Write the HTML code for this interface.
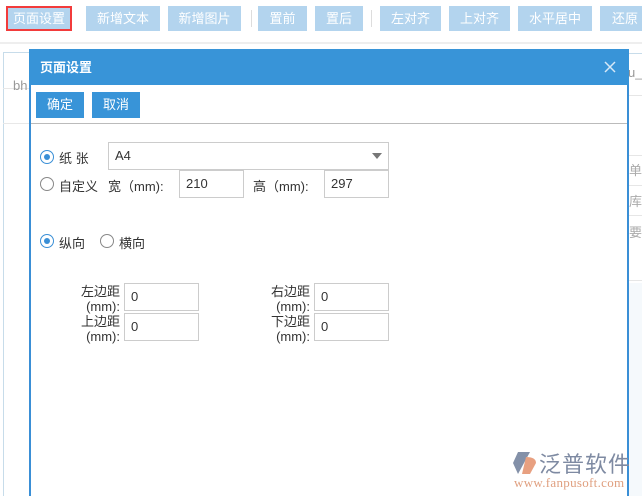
<!DOCTYPE html>
<html><head><meta charset="utf-8"><style>
*{box-sizing:border-box;margin:0;padding:0}
html,body{width:642px;height:496px;overflow:hidden}
body{background:#fff;font-family:"Liberation Sans","Noto Sans CJK SC",sans-serif;font-size:13px;color:#333;position:relative}
.abs{position:absolute}
.tb{position:absolute;top:6px;height:25px;background:#b3d4ee;color:#fff;font-size:13px;line-height:25px;text-align:center}
.sep{position:absolute;top:10px;width:1px;height:17px;background:#ddd}
.in{position:absolute;border:1px solid #ccc;background:#fff;padding-left:6px;line-height:26px;font-size:13px;color:#333}
.rad{position:absolute;width:14px;height:14px;border:1px solid #888;border-radius:50%;background:#fff}
.rad.on{border-color:#3a8fd6}
.rad.on:after{content:"";position:absolute;left:3px;top:3px;width:6px;height:6px;border-radius:50%;background:#3a8fd6}
.lbl{position:absolute;font-size:13px;color:#333;white-space:nowrap}
.ml{position:absolute;text-align:right;font-size:13px;line-height:15px;color:#333;width:60px}
</style></head><body>
<div class="abs" style="left:0;top:0;width:642px;height:44px;background:#fff;border-bottom:2px solid #eee"></div>
<div class="tb" style="left:6px;width:66px;border:2px solid #f23b3b;line-height:21px">页面设置</div>
<div class="tb" style="left:86px;width:74px">新增文本</div>
<div class="tb" style="left:168px;width:73px">新增图片</div>
<div class="sep" style="left:251px"></div>
<div class="tb" style="left:258px;width:49px">置前</div>
<div class="tb" style="left:315px;width:48px">置后</div>
<div class="sep" style="left:371px"></div>
<div class="tb" style="left:380px;width:61px">左对齐</div>
<div class="tb" style="left:449px;width:61px">上对齐</div>
<div class="tb" style="left:518px;width:74px">水平居中</div>
<div class="tb" style="left:600px;width:50px">还原</div>
<div class="abs" style="left:3px;top:52px;width:178px;height:450px;border:1px solid #c7dcea;background:#fff"></div>
<div class="abs" style="left:3px;top:88px;width:178px;height:1px;background:#e8e8e8"></div>
<div class="abs" style="left:3px;top:123px;width:178px;height:1px;background:#e8e8e8"></div>
<div class="lbl" style="left:13px;top:78px;color:#999">bh</div>
<div class="abs" style="left:184px;top:53px;width:460px;height:450px;border:1px solid #c7dcea;background:#fff"></div>
<div class="abs" style="left:628px;top:95px;width:14px;height:1px;background:#e6e6e6"></div>
<div class="lbl" style="left:628px;top:65px;color:#999">u_</div>
<div class="abs" style="left:628px;top:155px;width:14px;height:1px;background:#e6e6e6"></div>
<div class="lbl" style="left:629px;top:160px;color:#aaa">单</div>
<div class="abs" style="left:628px;top:185px;width:14px;height:1px;background:#e6e6e6"></div>
<div class="lbl" style="left:629px;top:191px;color:#aaa">库</div>
<div class="abs" style="left:628px;top:215px;width:14px;height:1px;background:#e6e6e6"></div>
<div class="lbl" style="left:629px;top:222px;color:#aaa">要</div>
<div class="abs" style="left:628px;top:280px;width:14px;height:1px;background:#e6e6e6"></div>
<div class="abs" style="left:628px;top:283px;width:14px;height:220px;background:#f5f9fc"></div>

<div class="abs" style="left:29px;top:49px;width:600px;height:460px;border:2px solid #3a8fd6;border-top:0;background:#fff"></div>
<div class="abs" style="left:29px;top:49px;width:600px;height:36px;background:#3894d8"></div>
<div class="lbl" style="left:40px;top:57px;color:#fff;font-weight:bold;font-size:13px">页面设置</div>
<svg class="abs" style="left:604px;top:61px" width="12" height="12" viewBox="0 0 12 12"><path d="M1 1L11 11M11 1L1 11" stroke="#d6e8f7" stroke-width="1.5"/></svg>
<div class="abs" style="left:36px;top:92px;width:48px;height:26px;background:#3894d8;color:#fff;line-height:26px;text-align:center">确定</div>
<div class="abs" style="left:92px;top:92px;width:48px;height:26px;background:#3894d8;color:#fff;line-height:26px;text-align:center">取消</div>
<div class="abs" style="left:31px;top:123px;width:596px;height:1px;background:#bbb"></div>

<div class="rad on" style="left:40px;top:150px"></div>
<div class="lbl" style="left:59px;top:148px">纸 张</div>
<div class="in" style="left:108px;top:142px;width:281px;height:28px">A4</div>
<div class="abs" style="left:372px;top:153px;width:0;height:0;border-left:5px solid transparent;border-right:5px solid transparent;border-top:6px solid #777"></div>
<div class="rad" style="left:40px;top:177px"></div>
<div class="lbl" style="left:59px;top:176px">自定义</div>
<div class="lbl" style="left:108px;top:176px">宽（mm):</div>
<div class="in" style="left:179px;top:170px;width:65px;height:28px">210</div>
<div class="lbl" style="left:253px;top:176px">高（mm):</div>
<div class="in" style="left:324px;top:170px;width:65px;height:28px">297</div>

<div class="rad on" style="left:40px;top:234px"></div>
<div class="lbl" style="left:59px;top:233px">纵向</div>
<div class="rad" style="left:100px;top:234px"></div>
<div class="lbl" style="left:119px;top:233px">横向</div>

<div class="ml" style="left:60px;top:284px">左边距<br>(mm):</div>
<div class="in" style="left:124px;top:283px;width:75px;height:28px">0</div>
<div class="ml" style="left:60px;top:314px">上边距<br>(mm):</div>
<div class="in" style="left:124px;top:313px;width:75px;height:28px">0</div>
<div class="ml" style="left:250px;top:284px">右边距<br>(mm):</div>
<div class="in" style="left:314px;top:283px;width:75px;height:28px">0</div>
<div class="ml" style="left:250px;top:314px">下边距<br>(mm):</div>
<div class="in" style="left:314px;top:313px;width:75px;height:28px">0</div>

<svg class="abs" style="left:512px;top:451px" width="26" height="24" viewBox="0 0 26 24"><path d="M6 1 L18 1 L12 12 L6 23 L1 12 Z" fill="#8390a8"/><path d="M14 6 Q24 6 24 12 L18 23 L10 23 Z" fill="#e8a080"/></svg>
<div class="lbl" style="left:539px;top:447px;font-size:22px;color:#7e8aa2;letter-spacing:1px">泛普软件</div>
<div class="lbl" style="left:514px;top:475px;font-size:13px;color:#e0a080;font-family:'Liberation Serif',serif;letter-spacing:0.3px">www.fanpusoft.com</div>
</body></html>
